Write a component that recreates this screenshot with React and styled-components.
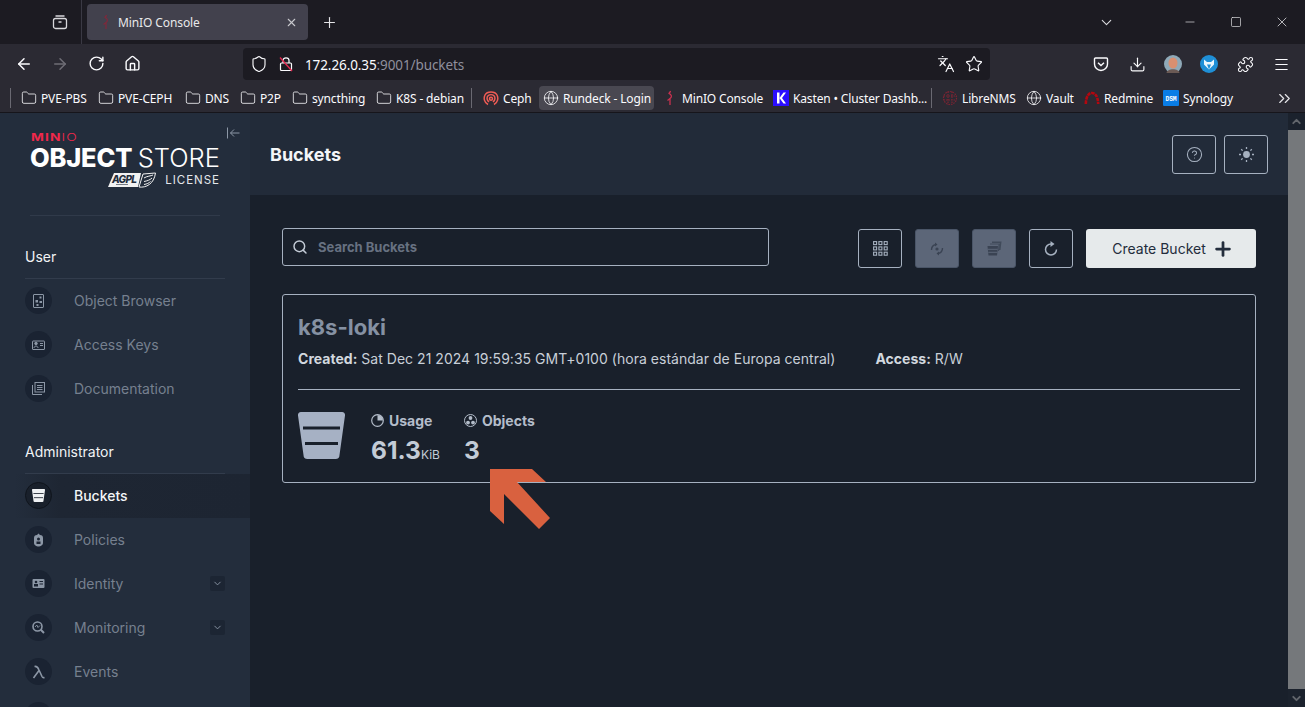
import styled, { createGlobalStyle } from "styled-components";
import {
  ArrowLeft,
  ArrowRight,
  RotateCw,
  House,
  Shield,
  Languages,
  Star,
  Download,
  Puzzle,
  Menu,
  ChevronDown,
  ChevronUp,
  Minus,
  Square,
  X,
  Plus,
  Folder,
  Globe,
  ChevronsRight,
  Search,
  CircleHelp,
} from "lucide-react";

const Global = createGlobalStyle`
  html, body { margin: 0; padding: 0; background: #19202b; }
  * { box-sizing: border-box; }
`;

const Browser = styled.div`
  width: 1305px;
  height: 707px;
  display: flex;
  flex-direction: column;
  overflow: hidden;
  font-family: "Noto Sans", sans-serif;
  color: #fbfbfe;
`;

/* ---- browser chrome ---- */

const TabStrip = styled.div`
  height: 44px;
  flex: none;
  background: #1c1b22;
  display: flex;
  align-items: center;
  padding-left: 52px;
`;

const TabManager = styled.div`
  width: 30px;
  height: 44px;
  display: flex;
  align-items: center;
  border-right: 1px solid #3a3944;
  color: #d8d8dc;
`;

const Tab = styled.div`
  width: 221px;
  height: 36px;
  margin-left: 5px;
  padding: 0 10px 0 11px;
  background: #42414d;
  border-radius: 4px;
  display: flex;
  align-items: center;
  font-size: 12px;
  letter-spacing: -0.1px;
  color: #e8e8ea;
`;

const TabTitle = styled.span`
  flex: 1;
  margin-left: 4px;
`;

const NewTab = styled.div`
  margin-left: 13px;
  display: flex;
  color: #e4e4e8;
`;

const WindowControls = styled.div`
  margin-left: auto;
  display: flex;
  align-items: center;
  color: #dcdce0;
`;

const WindowButton = styled.div`
  width: 46px;
  display: flex;
  justify-content: center;
  margin-left: ${(p) => p.$gap || 0}px;
`;

const NavBar = styled.div`
  height: 40px;
  flex: none;
  background: #2b2a33;
  display: flex;
  align-items: center;
  padding-right: 6px;
`;

const NavButton = styled.div`
  width: 36px;
  display: flex;
  justify-content: center;
  color: ${(p) => (p.$off ? "#6f6e76" : "#fbfbfe")};
`;

const NavLeft = styled.div`
  display: flex;
  padding-left: 6px;
  width: 243px;
`;

const UrlBar = styled.div`
  width: 747px;
  height: 32px;
  background: #1c1b22;
  border-radius: 4px;
  display: flex;
  align-items: center;
  padding: 0 7px 0 7px;
  font-size: 13.5px;
  letter-spacing: -0.1px;
`;

const UrlIcons = styled.div`
  display: flex;
  align-items: center;
  gap: 10px;
  margin-right: 11px;
`;

const UrlText = styled.span`
  padding-top: 2px;
`;

const UrlHost = styled.span`
  color: #fbfbfe;
`;

const UrlRest = styled.span`
  color: #8f8f9d;
`;

const UrlEnd = styled.div`
  margin-left: auto;
  display: flex;
  align-items: center;
  gap: 10px;
`;

const NavRight = styled.div`
  margin-left: auto;
  display: flex;
  align-items: center;
`;

const Bookmarks = styled.div`
  height: 29px;
  flex: none;
  background: #2b2a33;
  border-bottom: 1px solid #16151b;
  display: flex;
  align-items: center;
  padding-left: 10px;
  font-size: 12px;
  letter-spacing: -0.15px;
  position: relative;
`;

const BookmarkSep = styled.div`
  width: 1px;
  height: 20px;
  background: #6a6972;
  margin: 0 ${(p) => p.$right}px 0 ${(p) => p.$left}px;
`;

const Bookmark = styled.div`
  height: 24px;
  padding: 0 4px;
  border-radius: 4px;
  display: flex;
  align-items: center;
  gap: 4px;
  white-space: nowrap;
  background: ${(p) => (p.$active ? "#494851" : "transparent")};
  margin-left: ${(p) => p.$gap ?? 4}px;
`;

const BookmarkLabel = styled.span`
  display: block;
  width: ${(p) => p.$w}px;
`;

const BookmarkMore = styled.div`
  margin-left: auto;
  margin-right: 11px;
  display: flex;
  color: #e4e4e8;
`;

/* ---- console ---- */

const Viewport = styled.div`
  flex: 1;
  min-height: 0;
  display: flex;
  font-family: Inter, sans-serif;
`;

const Sidebar = styled.aside`
  width: 250px;
  flex: none;
  background: #232d3c;
  overflow: hidden;
`;

const LogoBlock = styled.div`
  height: 103px;
  margin: 0 30px;
  padding-top: 19px;
  border-bottom: 1px solid #303a4a;
  position: relative;
`;

const LogoBrand = styled.div`
  height: 10px;
  line-height: 10px;
  font-size: 10px;
  letter-spacing: 0.8px;
  font-weight: 700;
  color: #f0284b;
  margin-left: 1px;
  transform: scaleX(1.38);
  transform-origin: left center;
`;

const LogoThin = styled.span`
  font-weight: 300;
`;

const LogoTitle = styled.div`
  margin-top: 3px;
  height: 25px;
  line-height: 25px;
  font-size: 25.5px;
  letter-spacing: -0.2px;
  font-weight: 800;
  color: #fff;
  white-space: nowrap;
`;

const LogoLight = styled.span`
  font-weight: 300;
  letter-spacing: 0;
`;

const LogoLicense = styled.div`
  margin-top: 2px;
  display: flex;
  justify-content: flex-end;
  align-items: center;
  gap: 9px;
  font-size: 11.5px;
  letter-spacing: 1px;
  color: #e4e7eb;
`;

const Collapse = styled.div`
  position: absolute;
  left: 197px;
  top: 14px;
  display: flex;
`;

const SectionTitle = styled.div`
  margin: 0 25px;
  padding: 31px 0 11px;
  line-height: 20px;
  font-size: 14px;
  color: #f1f3f5;
  border-bottom: 1px solid #323c4c;
`;

const NavRow = styled.div`
  height: 44px;
  display: flex;
  align-items: center;
  padding: 0 25px 1px;
  font-size: 14px;
  color: ${(p) => (p.$active ? "#f4f6f8" : "#76808f")};
  font-weight: ${(p) => (p.$active ? 500 : 400)};
  background: ${(p) =>
    p.$active
      ? "linear-gradient(90deg, #232d3c 15px, #1e2633 60px, #1d2532)"
      : "transparent"};
`;

const NavLabel = styled.span`
  padding-bottom: 1px;
`;

const NavBadge = styled.div`
  width: 27px;
  height: 27px;
  flex: none;
  border-radius: 50%;
  background: ${(p) => (p.$active ? "#19202b" : "#1a2332")};
  border: ${(p) => (p.$active ? "1px solid #0f141c" : "none")};
  color: ${(p) => (p.$active ? "#f0f2f4" : "#8c97a6")};
  display: flex;
  align-items: center;
  justify-content: center;
  margin-right: 22px;
`;

const NavChevron = styled.div`
  margin-left: auto;
  width: 15px;
  height: 15px;
  background: #1c2533;
  border-radius: 2px;
  color: #8c97a6;
  display: flex;
  align-items: center;
  justify-content: center;
`;

const Main = styled.main`
  flex: 1;
  min-width: 0;
  background: #19202b;
`;

const PageHeader = styled.header`
  height: 82px;
  background: #222b39;
  display: flex;
  align-items: center;
  justify-content: space-between;
  padding: 0 20px;
`;

const PageTitle = styled.h1`
  margin: 0;
  font-size: 18px;
  font-weight: 700;
  color: #f4f6f8;
`;

const HeaderActions = styled.div`
  display: flex;
  gap: 8px;
`;

const IconButton = styled.div`
  width: 44px;
  height: 39px;
  flex: none;
  border-radius: 3px;
  border: 1px solid ${(p) => (p.$disabled ? "#4a5567" : "#a6b1c0")};
  background: ${(p) => (p.$disabled ? "#5c6678" : "transparent")};
  color: ${(p) => (p.$disabled ? "#3a4353" : "#a6b1c0")};
  display: flex;
  align-items: center;
  justify-content: center;
`;

const Content = styled.div`
  padding: 33px 32px 0;
`;

const Toolbar = styled.div`
  display: flex;
  align-items: flex-start;
  gap: 13px;
  height: 40px;
`;

const SearchBox = styled.div`
  width: 487px;
  height: 38px;
  margin-right: 76px;
  border: 1px solid #a6b1c0;
  border-radius: 3px;
  display: flex;
  align-items: center;
  gap: 10px;
  padding-left: 9px;
  color: #c3cbd6;
  font-size: 13px;
  font-weight: 700;
`;

const Placeholder = styled.span`
  color: #677181;
`;

const ToolButtons = styled.div`
  display: flex;
  gap: 13px;
  margin-top: 1px;
`;

const CreateButton = styled.div`
  width: 170px;
  height: 39px;
  padding-left: 4px;
  background: #e6eaeb;
  border-radius: 3px;
  color: #232d3c;
  font-size: 14px;
  display: flex;
  align-items: center;
  justify-content: center;
  gap: 6px;
`;

const Card = styled.section`
  position: relative;
  margin-top: 26px;
  height: 189px;
  border: 1px solid #a6b1c0;
  border-radius: 3px;
  padding: 0 15px;
`;

const BucketName = styled.h2`
  margin: 0;
  padding-top: 19px;
  line-height: 27px;
  font-size: 22px;
  font-weight: 700;
  color: #8591a3;
`;

const MetaRow = styled.div`
  display: flex;
  margin-top: 8px;
  line-height: 20px;
  font-size: 14px;
  letter-spacing: 0.025px;
  color: #c8cfd8;
  padding-bottom: 20px;
  border-bottom: 1px solid #a6b1c0;
`;

const MetaItem = styled.div`
  margin-right: 40px;
`;

const MetaLabel = styled.strong`
  font-weight: 700;
  color: #d2d8df;
`;

const StatRow = styled.div`
  display: flex;
  padding-top: 21px;
`;

const BucketArt = styled.div`
  width: 47px;
  height: 47px;
  margin: 1px 26px 0 0;
  display: flex;
`;

const Stat = styled.div`
  margin-right: ${(p) => p.$gap}px;
`;

const StatLabel = styled.div`
  height: 18px;
  display: flex;
  align-items: center;
  gap: 5px;
  font-size: 14px;
  font-weight: 700;
  color: #b4bdca;
`;

const StatValue = styled.div`
  margin-top: 6px;
  line-height: 30px;
  font-size: 24.5px;
  font-weight: 700;
  color: #c3cbd6;
  white-space: nowrap;
`;

const StatUnit = styled.span`
  font-size: 12px;
  font-weight: 400;
`;

const Arrow = styled.svg`
  position: absolute;
  left: 206px;
  top: 173px;
`;

const Scrollbar = styled.div`
  width: 17px;
  flex: none;
  background: #1b222d;
  display: flex;
  flex-direction: column;
`;

const ScrollArrow = styled.div`
  height: ${(p) => p.$h}px;
  flex: none;
  display: flex;
  align-items: center;
  justify-content: center;
  color: #62666c;
`;

const ScrollThumb = styled.div`
  flex: 1;
  background: #75787b;
`;

/* ---- drawings ---- */

const MinioBird = ({ color = "#c8314f", size = 16 }) => (
  <svg width={size} height={size} viewBox="0 0 16 16" fill="none" stroke={color} strokeWidth="1.3">
    <path d="M9 1.5 C7 2 7 3.5 8.5 4.5 C10 5.8 9.5 7.5 8 8.5 L8 15 M8 8.5 L5.5 10.5 M8.5 4.5 L6.5 3" />
  </svg>
);

const CephIcon = () => (
  <svg width="16" height="16" viewBox="0 0 16 16" fill="none" stroke="#ef5c55" strokeWidth="1.5">
    <path d="M5 14.5 C1 12.5 0.5 8 2 5 C4 1 12 1 14 5 C15.5 8 15 12.5 11 14.5" />
    <path d="M6 12 C3.5 10 3.7 7 5 5.8 C6.6 4.4 9.4 4.4 11 5.8 C12.3 7 12.5 10 10 12" />
    <circle cx="8" cy="8.7" r="1.5" />
  </svg>
);

const KastenIcon = () => (
  <svg width="16" height="16" viewBox="0 0 16 16">
    <rect width="16" height="16" fill="#2a0dff" />
    <path d="M4 2.5 H6.5 V13.5 H4 Z M6.5 8 L10.5 2.5 H13 L9 8 L13 13.5 H10.5 Z" fill="#fff" />
  </svg>
);

const LibreIcon = () => (
  <svg width="16" height="16" viewBox="0 0 16 16" fill="none" stroke="#7d2433" strokeWidth="1.2" strokeDasharray="1.5 1">
    <circle cx="8" cy="8" r="6.5" />
    <path d="M1.5 6 H14.5 M1.5 10 H14.5 M6 1.5 V14.5 M10 1.5 V14.5" />
  </svg>
);

const RedmineIcon = () => (
  <svg width="16" height="16" viewBox="0 0 16 16" fill="none" stroke="#b3070f" strokeWidth="2.6">
    <path d="M1.8 14 C2 6 5 3 8 3 C11 3 14 6 14.2 14" strokeDasharray="3.6 0.7" />
  </svg>
);

const DsmIcon = () => (
  <svg width="16" height="16" viewBox="0 0 16 16">
    <rect width="16" height="16" rx="1" fill="#0a7de6" />
    <text x="8" y="10.5" textAnchor="middle" fontSize="6.4" fontWeight="700" fill="#fff" fontFamily="Liberation Mono, monospace">DSM</text>
  </svg>
);

const LockOff = () => (
  <svg width="16" height="16" viewBox="0 0 16 16" fill="none" stroke="#fbfbfe" strokeWidth="1.2">
    <rect x="2.5" y="7" width="11" height="7.5" rx="1" />
    <path d="M5 7 V4.5 C5 1 11 1 11 4.5 V7" />
    <path d="M2 1.5 L14 15" stroke="#e22850" strokeWidth="1.4" />
  </svg>
);

const PocketIcon = () => (
  <svg width="16" height="16" viewBox="0 0 16 16" fill="none" stroke="#fbfbfe" strokeWidth="1.4">
    <path d="M2.5 2 H13.5 A1 1 0 0 1 14.5 3 V8 A6.5 6.5 0 0 1 1.5 8 V3 A1 1 0 0 1 2.5 2 Z" />
    <path d="M5 6.8 L8 9.6 L11 6.8" />
  </svg>
);

const Avatar = () => (
  <svg width="18" height="18" viewBox="0 0 18 18">
    <circle cx="9" cy="9" r="9" fill="#8fa9b8" />
    <ellipse cx="9" cy="8" rx="4.5" ry="5.5" fill="#d98f70" />
    <path d="M2.5 18 C3 13 15 13 15.5 18 Z" fill="#6b5a55" />
  </svg>
);

const FoxAddon = () => (
  <svg width="18" height="18" viewBox="0 0 18 18">
    <circle cx="9" cy="9" r="9" fill="#1f8fd6" />
    <path d="M4 4.5 L7 7 H11 L14 4.5 L14 9.5 L9 14.5 L4 9.5 Z" fill="#eaf6fd" />
    <path d="M9 14.5 L7 9.5 H11 Z" fill="#1f8fd6" />
  </svg>
);

const TabBox = () => (
  <svg width="16" height="16" viewBox="0 0 16 16" fill="none" stroke="currentColor" strokeWidth="1.3">
    <rect x="1.5" y="4.5" width="13" height="10" rx="2" />
    <path d="M3.5 2 H12.5 M6.5 8 H9.5" />
  </svg>
);

const Bucket = ({ size = 13, slit = "#19202b", color = "currentColor" }) => (
  <svg width={size} height={size} viewBox="0 0 47 47">
    <path d="M3 0 H44 A3 3 0 0 1 47 3.500 L41.500 43 A4 4 0 0 1 37.500 47 H9.500 A4 4 0 0 1 5.500 43 L0 3.500 A3 3 0 0 1 3 0 Z" fill={color} />
    <rect x="5" y="14.500" width="37" height="3" fill={slit} />
    <rect x="7" y="30" width="33" height="3" fill={slit} />
  </svg>
);

const ObjectBrowserIcon = () => (
  <svg width="13" height="14" viewBox="0 0 13 14" fill="none" stroke="currentColor">
    <rect x="1.500" y="0.500" width="10" height="13" rx="0.5" />
    <g fill="currentColor" stroke="none">
      <rect x="7.500" y="2.500" width="2" height="2" />
      <rect x="3.500" y="6" width="2.500" height="2.500" />
      <rect x="7.500" y="7" width="2.500" height="2" />
      <rect x="4.500" y="10" width="2" height="2" />
    </g>
  </svg>
);

const AccessKeysIcon = () => (
  <svg width="13" height="13" viewBox="0 0 13 13" fill="none" stroke="currentColor">
    <rect x="0.500" y="3" width="12" height="8.500" rx="0.5" />
    <circle cx="4" cy="5.500" r="1.300" fill="currentColor" />
    <path d="M2 10 C2 7.500 6 7.500 6 10 M8 5.500 H11 M8 7.500 H11" />
  </svg>
);

const DocsIcon = () => (
  <svg width="13" height="13" viewBox="0 0 13 13" fill="none" stroke="currentColor">
    <rect x="3" y="0.500" width="9.500" height="9.500" />
    <path d="M0.500 3 V12.500 H10 M5 3.500 H10.500 M5 5.500 H10.500 M5 7.500 H10.500" />
  </svg>
);

const PolicyIcon = () => (
  <svg width="13" height="14" viewBox="0 0 13 14">
    <path d="M6.500 0.500 L8 2 C10 2 11 3 11 5 V10 C11 12 8.500 13.500 6.500 13.500 C4.500 13.500 2 12 2 10 V5 C2 3 3 2 5 2 Z" fill="currentColor" />
    <circle cx="6.500" cy="6" r="1.500" fill="#1a2332" />
    <rect x="4.500" y="8.500" width="4" height="2.500" fill="#1a2332" />
  </svg>
);

const IdentityIcon = () => (
  <svg width="13" height="13" viewBox="0 0 13 13">
    <rect x="0.500" y="2" width="12" height="9" rx="1" fill="currentColor" />
    <circle cx="4" cy="5" r="1.300" fill="#1a2332" />
    <rect x="2" y="7" width="4" height="2.500" fill="#1a2332" />
    <rect x="7.500" y="4" width="3.500" height="1" fill="#1a2332" />
    <rect x="7.500" y="6.500" width="3.500" height="1" fill="#1a2332" />
  </svg>
);

const MonitoringIcon = () => (
  <svg width="13" height="13" viewBox="0 0 13 13" fill="none" stroke="currentColor" strokeWidth="1.600">
    <circle cx="5.500" cy="5.500" r="4.500" />
    <path d="M8.800 8.800 L12 12" strokeWidth="2" />
    <path d="M3 6 L4.800 4 L6 6.500 L8 4.500" strokeWidth="0.9" />
  </svg>
);

const EventsIcon = () => (
  <svg width="14" height="14" viewBox="0 0 14 14" fill="none" stroke="currentColor" strokeWidth="1.600">
    <path d="M2.500 1.500 C5 1 6 2.500 7 5 L10 11.500 C10.500 12.500 11.500 12.800 12.500 12.500 M7 5.500 L1.500 13" />
  </svg>
);

const GridIcon = () => (
  <svg width="15" height="15" viewBox="0 0 15 15" fill="none" stroke="currentColor" strokeWidth="1.100">
    {[0, 5.300, 10.600].map((y) =>
      [0, 5.300, 10.600].map((x) => (
        <rect key={`${x}-${y}`} x={x + 0.600} y={y + 0.600} width="3" height="3" />
      ))
    )}
  </svg>
);

const SyncIcon = () => (
  <svg width="14" height="14" viewBox="0 0 14 14" fill="none" stroke="currentColor" strokeWidth="1.400">
    <path d="M1.500 8 C1.500 5 3.500 3 6 2.500 M12.500 6 C12.500 9 10.500 11 8 11.500" />
    <path d="M5 0.500 L7.500 2.500 L5 4.500 M9 9.500 L6.500 11.500 L9 13.500" fill="currentColor" stroke="none" />
    <circle cx="7" cy="7" r="1.600" fill="currentColor" stroke="none" />
  </svg>
);

const BucketsIcon = () => (
  <svg width="15" height="15" viewBox="0 0 15 15" fill="currentColor">
    <path d="M5 0.500 H14.500 L13.500 9 H12 L13 2 H5 Z" opacity="0.800" />
    <path d="M3 2.500 H13 L12 10 H11 L11.500 3.500 H3 Z" opacity="0.800" />
    <path d="M0.500 5 H11 L10 14.500 H1.500 Z" />
    <rect x="1" y="7.800" width="9.500" height="1" fill="#5c6678" />
    <rect x="1.300" y="10.800" width="9" height="1" fill="#5c6678" />
  </svg>
);

const ReloadIcon = () => (
  <svg width="14" height="15" viewBox="0 0 14 15" fill="none" stroke="currentColor" strokeWidth="1.500">
    <path d="M7 3 A5.500 5.500 0 1 0 12.500 8.500" />
    <path d="M6.500 0 L10.500 3 L6.500 6 Z" fill="currentColor" stroke="none" />
  </svg>
);

const SunIcon = () => (
  <svg width="15" height="15" viewBox="0 0 15 15" stroke="currentColor" strokeWidth="1.300" fill="currentColor">
    <circle cx="7.500" cy="7.500" r="3.400" stroke="none" />
    <path d="M7.500 0 V2 M7.500 13 V15 M0 7.500 H2 M13 7.500 H15 M2.200 2.200 L3.600 3.600 M11.400 11.400 L12.800 12.800 M2.200 12.800 L3.600 11.400 M11.400 3.600 L12.800 2.200" />
  </svg>
);

const UsageIcon = () => (
  <svg width="13" height="13" viewBox="0 0 13 13" fill="none" stroke="currentColor" strokeWidth="1.200">
    <circle cx="6.500" cy="6.500" r="5.800" />
    <path d="M6.500 1 A5.500 5.500 0 0 1 12 6.500 H6.500 Z" fill="currentColor" stroke="none" />
  </svg>
);

const ObjectsIcon = () => (
  <svg width="13" height="13" viewBox="0 0 13 13" fill="none" stroke="currentColor" strokeWidth="1">
    <circle cx="6.500" cy="6.500" r="6" />
    <g fill="currentColor" stroke="none">
      <circle cx="6.500" cy="4" r="1.900" />
      <circle cx="4" cy="8.600" r="1.900" />
      <circle cx="9" cy="8.600" r="1.900" />
    </g>
  </svg>
);

const AgplBadge = () => (
  <svg width="48" height="16" viewBox="0 0 48 16">
    <path d="M6 1 H33 L30 15 H0 Z" fill="#f2f2f2" />
    <text x="17" y="10.500" textAnchor="middle" fontSize="10" fontWeight="800" fontStyle="italic" fill="#232d3c" fontFamily="Inter, sans-serif" textLength="26">AGPL</text>
    <rect x="8" y="12" width="12" height="1" fill="#232d3c" opacity="0.6" />
    <path d="M31 15 C38 16 46 12 47.500 1 L35 2 Z" fill="#232d3c" stroke="#f2f2f2" />
    <path d="M36 6 C39 4 43 4 45 3 M36 9.500 C39 9 42 8 44 6 M36 12.500 C39 12 41 11 42.500 9.500" stroke="#f2f2f2" fill="none" />
  </svg>
);

const bookmarks = [
  { label: "PVE-PBS", w: 45 },
  { label: "PVE-CEPH", w: 55 },
  { label: "DNS", w: 23 },
  { label: "P2P", w: 20 },
  { label: "syncthing", w: 52 },
  { label: "K8S - debian", w: 66 },
];

const sideUser = [
  { label: "Object Browser", icon: <ObjectBrowserIcon /> },
  { label: "Access Keys", icon: <AccessKeysIcon /> },
  { label: "Documentation", icon: <DocsIcon /> },
];

// the last row is only peeking in at the bottom edge, its label is off screen
const sideAdmin = [
  { label: "Buckets", icon: <Bucket slit="#19202b" />, active: true },
  { label: "Policies", icon: <PolicyIcon /> },
  { label: "Identity", icon: <IdentityIcon />, more: true },
  { label: "Monitoring", icon: <MonitoringIcon />, more: true },
  { label: "Events", icon: <EventsIcon /> },
  { label: "", icon: <Bucket /> },
];

function SideRow({ item }) {
  return (
    <NavRow $active={item.active}>
      <NavBadge $active={item.active}>{item.icon}</NavBadge>
      <NavLabel>{item.label}</NavLabel>
      {item.more && (
        <NavChevron>
          <ChevronDown size={11} />
        </NavChevron>
      )}
    </NavRow>
  );
}

export default function App() {
  return (
    <Browser>
      <Global />
      <TabStrip>
        <TabManager>
          <TabBox />
        </TabManager>
        <Tab>
          <MinioBird color="#7c2a3c" />
          <TabTitle>MinIO Console</TabTitle>
          <X size={13} color="#c9c9ce" />
        </Tab>
        <NewTab>
          <Plus size={17} strokeWidth={1.6} />
        </NewTab>
        <WindowControls>
          <ChevronDown size={17} strokeWidth={1.5} />
          <WindowButton $gap={52}>
            <Minus size={14} strokeWidth={1.2} />
          </WindowButton>
          <WindowButton>
            <Square size={12} strokeWidth={1.4} />
          </WindowButton>
          <WindowButton>
            <X size={16} strokeWidth={1.2} />
          </WindowButton>
        </WindowControls>
      </TabStrip>

      <NavBar>
        <NavLeft>
          <NavButton><ArrowLeft size={18} /></NavButton>
          <NavButton $off><ArrowRight size={18} /></NavButton>
          <NavButton><RotateCw size={17} /></NavButton>
          <NavButton><House size={17} /></NavButton>
        </NavLeft>
        <UrlBar>
          <UrlIcons>
            <Shield size={18} strokeWidth={1.5} />
            <LockOff />
          </UrlIcons>
          <UrlText>
            <UrlHost>172.26.0.35</UrlHost>
            <UrlRest>:9001/buckets</UrlRest>
          </UrlText>
          <UrlEnd>
            <Languages size={18} strokeWidth={1.6} />
            <Star size={18} strokeWidth={1.5} />
          </UrlEnd>
        </UrlBar>
        <NavRight>
          <NavButton><PocketIcon /></NavButton>
          <NavButton><Download size={17} strokeWidth={1.6} /></NavButton>
          <NavButton><Avatar /></NavButton>
          <NavButton><FoxAddon /></NavButton>
          <NavButton><Puzzle size={17} strokeWidth={1.5} /></NavButton>
          <NavButton><Menu size={17} strokeWidth={1.6} /></NavButton>
        </NavRight>
      </NavBar>

      <Bookmarks>
        <BookmarkSep $left={0} $right={3} />
        {bookmarks.map((b, i) => (
          <Bookmark key={b.label} $gap={i === 0 ? 3 : 4}>
            <Folder size={16} strokeWidth={1.2} />
            <BookmarkLabel $w={b.w}>{b.label}</BookmarkLabel>
          </Bookmark>
        ))}
        <BookmarkSep $left={5} $right={7} />
        <Bookmark $gap={0}>
          <CephIcon />
          <BookmarkLabel $w={28}>Ceph</BookmarkLabel>
        </Bookmark>
        <Bookmark $active>
          <Globe size={16} strokeWidth={1.2} />
          <BookmarkLabel $w={87}>Rundeck - Login</BookmarkLabel>
        </Bookmark>
        <Bookmark $gap={4}>
          <MinioBird />
          <BookmarkLabel $w={79}>MinIO Console</BookmarkLabel>
        </Bookmark>
        <Bookmark $gap={4}>
          <KastenIcon />
          <BookmarkLabel $w={128}>Kasten • Cluster Dashb...</BookmarkLabel>
        </Bookmark>
        <BookmarkSep $left={6} $right={6} />
        <Bookmark $gap={0}>
          <LibreIcon />
          <BookmarkLabel $w={52}>LibreNMS</BookmarkLabel>
        </Bookmark>
        <Bookmark>
          <Globe size={16} strokeWidth={1.2} />
          <BookmarkLabel $w={26}>Vault</BookmarkLabel>
        </Bookmark>
        <Bookmark>
          <RedmineIcon />
          <BookmarkLabel $w={47}>Redmine</BookmarkLabel>
        </Bookmark>
        <Bookmark>
          <DsmIcon />
          <BookmarkLabel $w={49}>Synology</BookmarkLabel>
        </Bookmark>
        <BookmarkMore>
          <ChevronsRight size={19} strokeWidth={1.5} />
        </BookmarkMore>
      </Bookmarks>

      <Viewport>
        <Sidebar>
          <LogoBlock>
            <LogoBrand>
              MIN<LogoThin>IO</LogoThin>
            </LogoBrand>
            <LogoTitle>
              OBJECT <LogoLight>STORE</LogoLight>
            </LogoTitle>
            <LogoLicense>
              <AgplBadge />
              LICENSE
            </LogoLicense>
            <Collapse>
              <svg width="13" height="12" viewBox="0 0 13 12" fill="none" stroke="#8c97a6" strokeWidth="1">
                <path d="M0.500 0.500 V11.500 M12.500 6 H3.500 M7 2.500 L3.500 6 L7 9.500" />
              </svg>
            </Collapse>
          </LogoBlock>
          <SectionTitle>User</SectionTitle>
          {sideUser.map((item) => (
            <SideRow key={item.label} item={item} />
          ))}
          <SectionTitle>Administrator</SectionTitle>
          {sideAdmin.map((item) => (
            <SideRow key={item.label} item={item} />
          ))}
        </Sidebar>

        <Main>
          <PageHeader>
            <PageTitle>Buckets</PageTitle>
            <HeaderActions>
              <IconButton>
                <CircleHelp size={17} strokeWidth={1.5} />
              </IconButton>
              <IconButton>
                <SunIcon />
              </IconButton>
            </HeaderActions>
          </PageHeader>

          <Content>
            <Toolbar>
              <SearchBox>
                <Search size={16} strokeWidth={2.2} />
                <Placeholder>Search Buckets</Placeholder>
              </SearchBox>
              <ToolButtons>
                <IconButton><GridIcon /></IconButton>
                <IconButton $disabled><SyncIcon /></IconButton>
                <IconButton $disabled><BucketsIcon /></IconButton>
                <IconButton><ReloadIcon /></IconButton>
                <CreateButton>
                  Create Bucket
                  <Plus size={22} strokeWidth={3} />
                </CreateButton>
              </ToolButtons>
            </Toolbar>

            <Card>
              <BucketName>k8s-loki</BucketName>
              <MetaRow>
                <MetaItem>
                  <MetaLabel>Created:</MetaLabel> Sat Dec 21 2024 19:59:35 GMT+0100 (hora estándar de Europa central)
                </MetaItem>
                <MetaItem>
                  <MetaLabel>Access:</MetaLabel> R/W
                </MetaItem>
              </MetaRow>
              <StatRow>
                <BucketArt>
                  <Bucket size={47} color="#a6b1c4" />
                </BucketArt>
                <Stat $gap={24}>
                  <StatLabel>
                    <UsageIcon />
                    Usage
                  </StatLabel>
                  <StatValue>
                    61.3<StatUnit>KiB</StatUnit>
                  </StatValue>
                </Stat>
                <Stat $gap={0}>
                  <StatLabel>
                    <ObjectsIcon />
                    Objects
                  </StatLabel>
                  <StatValue>3</StatValue>
                </Stat>
              </StatRow>
              <Arrow width="62" height="62" viewBox="0 0 62 62">
                <path d="M1 1 H43 L57 14 H28 L61 50 L50 61 L15 26 V56 L1 43 Z" fill="#d9613f" />
              </Arrow>
            </Card>
          </Content>
        </Main>

        <Scrollbar>
          <ScrollArrow $h={17}>
            <ChevronUp size={13} strokeWidth={3.5} />
          </ScrollArrow>
          <ScrollThumb />
          <ScrollArrow $h={18}>
            <ChevronDown size={13} strokeWidth={3.5} />
          </ScrollArrow>
        </Scrollbar>
      </Viewport>
    </Browser>
  );
}
